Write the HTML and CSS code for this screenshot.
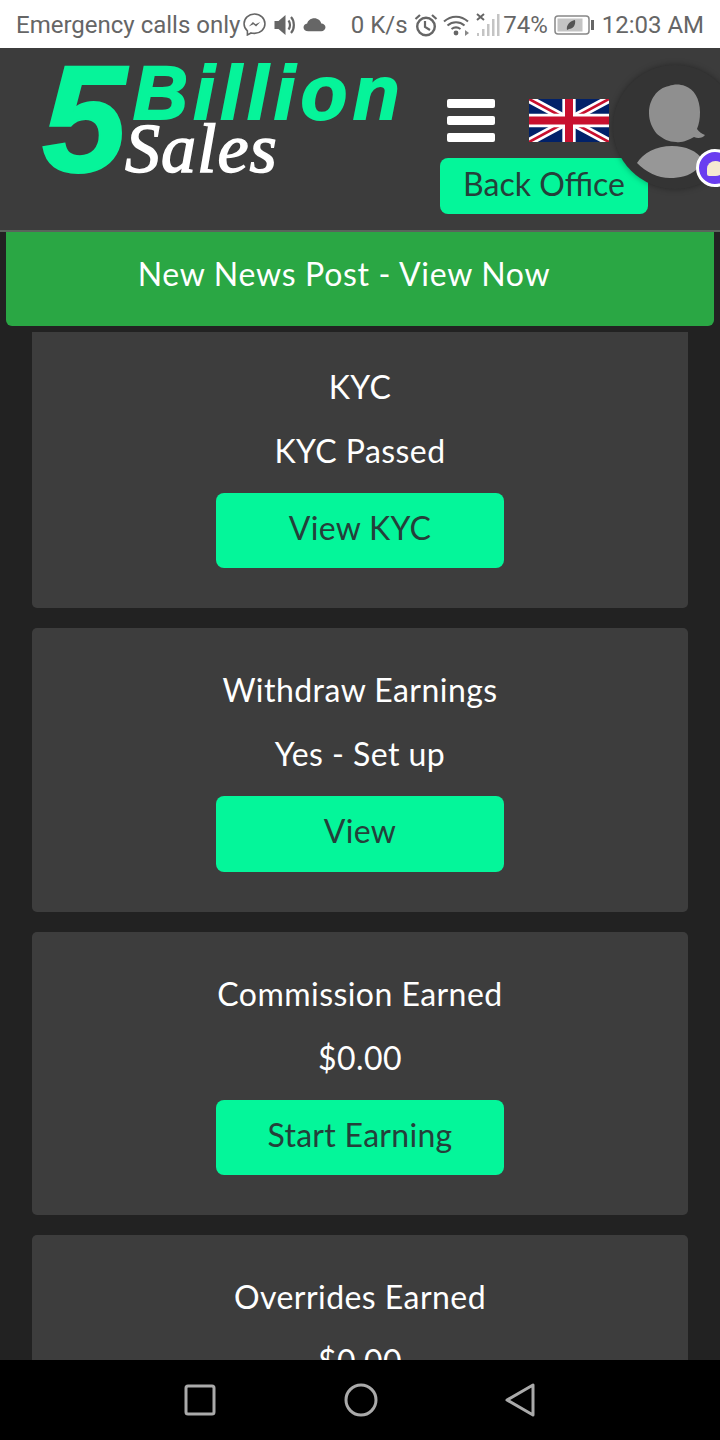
FILE: index.html
```html
<!DOCTYPE html>
<html lang="en">

<head>
    <meta charset="UTF-8">
    <meta name="viewport" content="width=device-width, initial-scale=1.0">
    <title>5 Billion Sales</title>
    <link rel="stylesheet" href="styles.css">
</head>

<body>
    <div class="phone">
        <div class="status-bar">
            <span class="carrier">Emergency calls only</span>
            <svg class="st-icon messenger" viewBox="0 0 22 22"><path d="M11 1C5.400 1 1 5 1 10.300c0 2.800 1.200 5.100 3.200 6.800V21l3.500-1.900c1 .3 2.100.4 3.300.4 5.600 0 10-4 10-9.200S16.600 1 11 1z" fill="none" stroke="#666" stroke-width="1.500"/><path d="M5.500 13l4-4.500 2.500 2.300 4.500-2.300-4 4.500-2.500-2.300z" fill="#666"/></svg>
            <svg class="st-icon volume" viewBox="0 0 20 22"><path d="M0 7h4l7-6v20l-7-6H0z" fill="#666"/><path d="M14 6.500c2 2.500 2 6.500 0 9M16.500 3c3.800 4 3.800 12 0 16" fill="none" stroke="#666" stroke-width="2.200"/></svg>
            <svg class="st-icon cloud" viewBox="0 0 22 14"><path d="M5 13.500C2.500 13.500.5 12 .5 9.800.5 7.800 2 6.300 4 6 4.800 3 7.500 1 10.800 1c3.400 0 6.100 2.200 6.700 5 2.300.1 4 1.600 4 3.700s-1.800 3.800-4 3.800z" fill="#666"/></svg>
            <span class="speed">0 K/s</span>
            <svg class="st-icon alarm" viewBox="0 0 24 24"><circle cx="12" cy="13.500" r="8.800" fill="none" stroke="#666" stroke-width="2.400"/><path d="M11 8v6l5 3" fill="none" stroke="#666" stroke-width="2.200"/><path d="M1.500 6L6 2M22.500 6L18 2" stroke="#666" stroke-width="2.200"/></svg>
            <svg class="st-icon wifi" viewBox="0 0 28 22"><path d="M1 7.500c7-6.500 17-6.500 24 0M4.500 11.500c5-4.300 12-4.300 17 0M8.500 15c2.800-2 6.200-2 9 0" fill="none" stroke="#666" stroke-width="2"/><circle cx="13" cy="19" r="2.400" fill="#666"/><path d="M22 16l4 3-4 3z" fill="#888"/></svg>
            <svg class="st-icon signal" viewBox="0 0 24 24"><path d="M1 1l7 6M8 1L1 7" stroke="#666" stroke-width="2"/><path d="M1 23h2v-3H1zM6 23h2.500v-7H6zM11 23h2.500V11H11zM16 23h2.500V6H16zM21 23h2.500V1H21z" fill="#c4c4c4"/></svg>
            <span class="battery-pct">74%</span>
            <svg class="st-icon battery" viewBox="0 0 40 20"><rect x="1" y="1" width="34" height="18" rx="3" fill="#fff" stroke="#888" stroke-width="1.500"/><rect x="3.500" y="3.500" width="25" height="13" fill="#c4c4c4"/><rect x="37" y="5" width="3" height="10" fill="#666"/><path d="M13 15c-1-5 3-9 8-10 1 5-2 9-6 9z" fill="#555"/></svg>
            <span class="clock">12:03 AM</span>
        </div>

        <header class="top-header">
            <div class="logo">
                <span class="logo-five">5</span>
                <div class="logo-words">
                    <span class="logo-billion">Billion</span>
                    <span class="logo-sales">Sales</span>
                </div>
            </div>
            <div class="header-nav">
                <div class="nav-row">
                    <div class="hamburger"><span></span><span></span><span></span></div>
                    <svg class="flag" viewBox="0 0 60 32" preserveAspectRatio="none">
                        <rect width="60" height="32" fill="#012169"/>
                        <path d="M0 0L60 32M60 0L0 32" stroke="#fff" stroke-width="6"/>
                        <path d="M0 0L60 32M60 0L0 32" stroke="#c8102e" stroke-width="2"/>
                        <path d="M30 0V32M0 16H60" stroke="#fff" stroke-width="10"/>
                        <path d="M30 0V32M0 16H60" stroke="#c8102e" stroke-width="6"/>
                    </svg>
                </div>
                <a class="btn-mint btn-back">Back Office</a>
            </div>
            <div class="avatar">
                <svg viewBox="0 0 124 124" width="124" height="124">
                    <path d="M56 21c5-2 11-2 16 0 9 3 15 13 15 26 0 7-1 12-3 17 2 3 5 5 8 6-2 3-7 4-11 2-6 3-11 6-18 5-7 0-13-3-19-8-5-6-8-13-8-21 0-13 8-25 20-27z" fill="#8f8f8f"/>
                    <path d="M24 98c6-10 19-17 35-17 14 0 25 5 31 14 0 2-3 7-7 10-7 6-16 8-26 8-12 0-24-6-33-15z" fill="#979797"/>
                </svg>
            </div>
            <div class="chat-badge"><span class="chat-bubble"></span></div>
        </header>

        <a class="news-bar">New News Post - View Now</a>

        <main class="scroll-area">
            <div class="cards">
                <section class="card">
                    <p class="card-line">KYC</p>
                    <p class="card-line">KYC Passed</p>
                    <a class="btn-mint btn-card">View KYC</a>
                </section>
                <section class="card">
                    <p class="card-line">Withdraw Earnings</p>
                    <p class="card-line">Yes - Set up</p>
                    <a class="btn-mint btn-card">View</a>
                </section>
                <section class="card">
                    <p class="card-line">Commission Earned</p>
                    <p class="card-line">$0.00</p>
                    <a class="btn-mint btn-card">Start Earning</a>
                </section>
                <section class="card">
                    <p class="card-line">Overrides Earned</p>
                    <p class="card-line">$0.00</p>
                    <a class="btn-mint btn-card">Start Earning</a>
                </section>
            </div>
        </main>

        <nav class="nav-bar">
            <svg viewBox="0 0 32 32" width="32" height="32"><rect x="2" y="2" width="28" height="28" rx="2" fill="none" stroke="#aaa" stroke-width="3"/></svg>
            <svg viewBox="0 0 34 34" width="34" height="34"><circle cx="17" cy="17" r="15" fill="none" stroke="#aaa" stroke-width="3"/></svg>
            <svg viewBox="0 0 30 34" width="30" height="34"><path d="M2 17L28 2V32z" fill="none" stroke="#aaa" stroke-width="3" stroke-linejoin="round"/></svg>
        </nav>
    </div>
</body>

</html>
```

FILE: styles.css
```css
body {
    margin: 0;
    background-color: #222222;
    font-family: 'Lato', 'Noto Sans', sans-serif;
    color: #ffffff;
}

.phone {
    width: 720px;
    height: 1440px;
    display: flex;
    flex-direction: column;
    overflow: hidden;
}

/* status bar */
.status-bar {
    height: 48px;
    flex: none;
    display: flex;
    align-items: center;
    padding: 1px 16px 0;
    box-sizing: border-box;
    background: #ffffff;
    color: #666666;
    font-family: 'Roboto', sans-serif;
    font-size: 24px;
}

.st-icon {
    flex: none;
}

.carrier {
    width: 229px;
    white-space: nowrap;
}

.messenger {
    width: 23px;
    height: 23px;
    margin-right: 8px;
}

.volume {
    width: 21px;
    height: 22px;
    margin-right: 8px;
}

.cloud {
    width: 23px;
    height: 15px;
    margin-right: 25px;
}

.speed {
    width: 64px;
    white-space: nowrap;
}

.alarm {
    width: 24px;
    height: 24px;
    margin-right: 5px;
}

.wifi {
    width: 28px;
    height: 22px;
    margin-right: 5px;
}

.signal {
    width: 24px;
    height: 24px;
    margin-right: 3px;
}

.battery-pct {
    width: 51px;
}

.battery {
    width: 40px;
    height: 20px;
    margin-right: 8px;
}

.clock {
    white-space: nowrap;
}

/* header */
.top-header {
    position: relative;
    height: 184px;
    flex: none;
    box-sizing: border-box;
    display: flex;
    background: #3c3c3c;
    border-bottom: 2px solid #5a645c;
}

.logo {
    width: 398px;
    flex: none;
    height: 120px;
    margin-top: 12px;
    padding-left: 42px;
    box-sizing: border-box;
    display: flex;
    font-family: 'Liberation Sans', sans-serif;
    font-weight: bold;
    font-style: italic;
}

.logo-five {
    flex: none;
    width: 91px;
    color: #06f49a;
    font-size: 152px;
    line-height: 118px;
    -webkit-text-stroke: 2px #06f49a;
}

.logo-words {
    flex: none;
    display: flex;
    flex-direction: column;
}

.logo-billion {
    color: #06f49a;
    font-size: 76px;
    line-height: 66px;
    letter-spacing: 5.7px;
    -webkit-text-stroke: 2px #06f49a;
}

.logo-sales {
    margin-left: -8px;
    color: #ffffff;
    font-family: 'Liberation Serif', serif;
    font-weight: normal;
    font-size: 70px;
    line-height: 46px;
    letter-spacing: 1px;
    -webkit-text-stroke: 1.5px #ffffff;
}

.header-nav {
    display: flex;
    flex-direction: column;
    width: 208px;
    margin-left: 42px;
    margin-top: 51px;
}

.nav-row {
    display: flex;
    align-items: flex-start;
    height: 59px;
    padding-left: 7px;
}

.hamburger {
    width: 48px;
    height: 43px;
    margin-right: 34px;
    display: flex;
    flex-direction: column;
    justify-content: space-between;
}

.hamburger span {
    height: 9px;
    background: #ffffff;
    border-radius: 2px;
}

.flag {
    width: 80px;
    height: 43px;
}

.btn-mint {
    display: flex;
    align-items: center;
    justify-content: center;
    box-sizing: border-box;
    background: #04f69a;
    color: #24403a;
    border-radius: 8px;
}

.btn-back {
    height: 56px;
    padding-bottom: 6px;
    font-size: 32px;
}

.avatar {
    position: absolute;
    left: 613px;
    top: 17px;
    width: 124px;
    height: 124px;
    border-radius: 50%;
    background: #343434;
    box-shadow: 0 0 6px rgba(0, 0, 0, 0.35);
    overflow: hidden;
}

.chat-badge {
    position: absolute;
    left: 696px;
    top: 101px;
    width: 38px;
    height: 38px;
    box-sizing: border-box;
    display: flex;
    align-items: center;
    justify-content: center;
    border-radius: 50%;
    background: #6a3df0;
    border: 3px solid #ffffff;
}

.chat-bubble {
    width: 17px;
    height: 15px;
    border-radius: 50% 50% 50% 2px;
    background: #f6e9d2;
}

/* news */
.news-bar {
    height: 94px;
    flex: none;
    box-sizing: border-box;
    margin: 0 6px 6px;
    padding: 0 32px 12px 0;
    display: flex;
    align-items: center;
    justify-content: center;
    background: #2aa744;
    border-radius: 0 0 6px 6px;
    font-size: 32px;
    letter-spacing: 0.7px;
}

/* cards */
.scroll-area {
    flex: 1;
    min-height: 0;
    overflow: hidden;
}

.cards {
    margin-top: -7.5px;
    padding: 0 32px;
    display: flex;
    flex-direction: column;
    gap: 20px;
}

.card {
    height: 283.5px;
    padding-top: 30px;
    box-sizing: border-box;
    display: flex;
    flex-direction: column;
    align-items: center;
    background: #3d3d3d;
    border-radius: 5px;
}

.card-line {
    margin: 0;
    font-size: 32px;
    line-height: 63px;
    padding-bottom: 1px;
    letter-spacing: 0.45px;
}

.btn-card {
    width: 288px;
    height: 75.5px;
    margin-top: 10px;
    padding-bottom: 6px;
    font-size: 32px;
    letter-spacing: 0.3px;
}

/* android nav */
.nav-bar {
    height: 80px;
    flex: none;
    display: flex;
    align-items: center;
    justify-content: space-between;
    padding: 0 185px 0 184px;
    background: #000000;
}
```
